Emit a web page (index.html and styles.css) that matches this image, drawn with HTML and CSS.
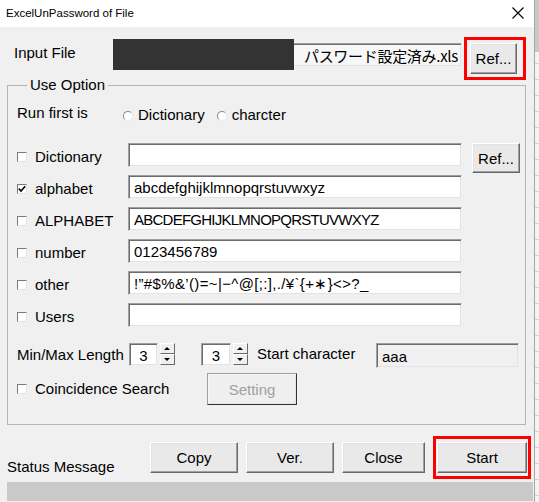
FILE: index.html
```html
<!DOCTYPE html>
<html>
<head>
<meta charset="utf-8">
<link rel="stylesheet" href="styles.css">
</head>
<body>
<div class="screen">
  <div class="window">
    <div class="titlebar">
      <span class="title">ExcelUnPassword of File</span>
      <svg class="close" width="12" height="12" viewBox="0 0 12 12"><path d="M0.5 0.5L11.5 11.5M11.5 0.5L0.5 11.5" stroke="#000" stroke-width="1.1" fill="none"/></svg>
    </div>
    <div class="content">
      <div class="file-row">
        <span class="file-label">Input File</span>
        <div class="textbox file-box">
          <span class="jp">パスワード設定済み.xls</span>
          <div class="redact"></div>
        </div>
        <div class="highlight hl-ref"><button class="btn ref-btn">Ref...</button></div>
      </div>

      <div class="group">
        <div class="legend">Use Option</div>
        <div class="run-row">
          <span class="run-label">Run first is</span>
          <span class="radio"></span><span class="radio-text">Dictionary</span>
          <span class="radio r2"></span><span class="radio-text">charcter</span>
        </div>
        <div class="rows">
          <div class="row">
            <span class="chk"></span><span class="chk-label">Dictionary</span>
            <div class="textbox field"></div>
            <button class="btn ref2">Ref...</button>
          </div>
          <div class="row">
            <span class="chk checked"><svg width="8" height="8" viewBox="0 0 8 8"><path d="M0.8 3.6L3 6L7.2 1.2" stroke="#000" stroke-width="1.6" fill="none"/></svg></span><span class="chk-label">alphabet</span>
            <div class="textbox field">abcdefghijklmnopqrstuvwxyz</div>
          </div>
          <div class="row">
            <span class="chk"></span><span class="chk-label">ALPHABET</span>
            <div class="textbox field upper">ABCDEFGHIJKLMNOPQRSTUVWXYZ</div>
          </div>
          <div class="row">
            <span class="chk"></span><span class="chk-label">number</span>
            <div class="textbox field">0123456789</div>
          </div>
          <div class="row">
            <span class="chk"></span><span class="chk-label">other</span>
            <div class="textbox field symbols">!”#$%&amp;’()=~|−^@[;:],./¥`{+∗}&lt;&gt;?_</div>
          </div>
          <div class="row">
            <span class="chk"></span><span class="chk-label">Users</span>
            <div class="textbox field"></div>
          </div>
        </div>
        <div class="len-row">
          <span class="len-label">Min/Max Length</span>
          <div class="textbox spin-box">3</div>
          <div class="spin"><span class="up"></span><span class="down"></span></div>
          <div class="textbox spin-box sb2">3</div>
          <div class="spin"><span class="up"></span><span class="down"></span></div>
          <span class="start-label">Start character</span>
          <div class="textbox start-box">aaa</div>
        </div>
        <div class="co-row">
          <span class="chk"></span><span class="chk-label co-label">Coincidence Search</span>
          <button class="btn setting" disabled>Setting</button>
        </div>
      </div>

      <div class="bottom-row">
        <span class="status-label">Status Message</span>
        <button class="btn bb copy">Copy</button>
        <button class="btn bb ver">Ver.</button>
        <button class="btn bb closeb">Close</button>
        <div class="highlight hl-start"><button class="btn bb start">Start</button></div>
      </div>
      <div class="status-bar"></div>
    </div>
  </div>
  <div class="sheet"></div>
</div>
</body>
</html>
```
FILE: styles.css
```css
html, body {
  margin: 0;
  padding: 0;
  width: 539px;
  height: 502px;
  overflow: hidden;
  background: #f0f0f0;
}
body {
  font-family: "Liberation Sans", "Noto Sans CJK JP", sans-serif;
  font-size: 15px;
  color: #000;
}
.screen {
  display: flex;
  width: 539px;
  height: 502px;
}
.window {
  width: 534px;
  height: 502px;
  border-right: 1px solid #a6a6a6;
  background: #f0f0f0;
  display: flex;
  flex-direction: column;
  flex: none;
}
.sheet {
  flex: 1;
  background:
    linear-gradient(#c9c9c9, #c9c9c9) 0 0 / 100% 52px no-repeat,
    repeating-linear-gradient(#f3f3f3 0 15px, #d4d4d4 15px 16px);
}
.titlebar {
  height: 27px;
  background: #fff;
  display: flex;
  align-items: center;
  justify-content: space-between;
  padding: 0 10px 2px 6px;
  box-sizing: border-box;
  flex: none;
}
.title {
  font-size: 11.5px;
}
.content {
  display: flex;
  flex-direction: column;
  padding-top: 10px;
}
.file-row {
  display: flex;
  align-items: flex-start;
  height: 43px;
}
.file-label {
  margin: 4px 0 0 14px;
  line-height: 24px;
  width: 99px;
}
.textbox {
  box-sizing: border-box;
  height: 24px;
  background: #fff;
  border: 1px solid;
  border-color: #a0a0a0 #f0f0f0 #f0f0f0 #a0a0a0;
  box-shadow: inset 1px 1px #6d6d6d, inset -1px -1px #e3e3e3;
  line-height: 23px;
  padding: 0 5px;
  white-space: nowrap;
  overflow: hidden;
}
.file-box {
  position: relative;
  overflow: visible;
  margin-top: 6px;
  width: 349px;
  text-align: right;
  padding-right: 3px;
  background: #f7f7f7;
}
.jp {
  font-family: "Noto Sans CJK JP", sans-serif;
  font-size: 15px;
  letter-spacing: -0.3px;
}
.redact {
  position: absolute;
  left: -1px;
  top: -5px;
  width: 181px;
  height: 31px;
  background: #333;
}
.highlight {
  border: 3px solid #ff0000;
  box-sizing: border-box;
}
.hl-ref {
  margin-left: 2px;
  width: 62px;
  height: 43px;
  padding: 3px 6px 3px 3px;
}
.btn {
  font: inherit;
  color: #000;
  background: #e9e9e9;
  border: 1px solid;
  border-color: #fff #696969 #696969 #fff;
  box-shadow: inset -1px -1px #a0a0a0, inset 1px 1px #e3e3e3;
  padding: 0;
  box-sizing: border-box;
  line-height: 1;
}
.ref-btn {
  width: 47px;
  height: 31px;
  display: block;
}
.group {
  margin: 5px 0 0 7px;
  width: 519px;
  box-sizing: border-box;
  border: 1px solid #b4b4b4;
  padding: 0 0 19px 9px;
}
.legend {
  margin: -11px 0 0 10px;
  background: #f0f0f0;
  padding: 0 3px;
  width: fit-content;
  line-height: 20px;
}
.run-row {
  margin-top: 6px;
  height: 24px;
  display: flex;
  align-items: center;
}
.run-label {
  width: 106px;
  margin-top: -2px;
}
.radio {
  width: 10px;
  height: 10px;
  border-radius: 50%;
  box-sizing: border-box;
  background: #fff;
  border: 1px solid;
  border-color: #8a8a8a #e8e8e8 #e8e8e8 #8a8a8a;
  margin-top: 5px;
}
.r2 {
  margin-left: 12px;
}
.radio-text {
  margin-left: 5px;
  margin-top: 2px;
}
.rows {
  margin-top: 18px;
  display: flex;
  flex-direction: column;
  gap: 8px;
}
.row {
  display: flex;
  align-items: flex-start;
  height: 24px;
}
.chk {
  width: 10px;
  height: 10px;
  box-sizing: border-box;
  background: #fff;
  border: 1px solid;
  border-color: #7a7a7a #e3e3e3 #e3e3e3 #7a7a7a;
  margin-top: 9px;
  display: flex;
  align-items: center;
  justify-content: center;
  flex: none;
}
.chk-label {
  margin: 2px 0 0 8px;
  width: 93px;
  line-height: 24px;
}
.field {
  width: 334px;
}
.upper {
  letter-spacing: -0.75px;
}
.symbols {
  letter-spacing: 0.35px;
}
.ref2 {
  margin-left: 10px;
  width: 48px;
  height: 30px;
}
.len-row {
  margin-top: 16px;
  height: 25px;
  display: flex;
  align-items: flex-start;
}
.len-label {
  width: 112px;
  line-height: 24px;
}
.spin-box {
  width: 29px;
  height: 23px;
  text-align: center;
  padding: 0;
}
.sb2 {
  margin-left: 26px;
  width: 30px;
}
.spin {
  margin-left: 2px;
  width: 15px;
  height: 22px;
  display: flex;
  flex-direction: column;
}
.spin span {
  flex: 1;
  background: #f0f0f0;
  border: 1px solid;
  border-color: #fff #696969 #696969 #fff;
  position: relative;
}
.spin span::after {
  content: "";
  position: absolute;
  left: 3px;
  top: 3px;
  border-left: 3.5px solid transparent;
  border-right: 3.5px solid transparent;
}
.spin .up::after {
  border-bottom: 3.5px solid #000;
}
.spin .down::after {
  border-top: 3.5px solid #000;
}
.start-label {
  margin-left: 9px;
  line-height: 22px;
  width: 119px;
}
.start-box {
  width: 143px;
  height: 25px;
  background: #f0f0f0;
  padding-left: 5px;
  line-height: 26px;
}
.co-row {
  margin-top: 5px;
  height: 32px;
  display: flex;
  align-items: flex-start;
}
.co-row .chk {
  margin-top: 11px;
}
.co-label {
  width: 172px;
  line-height: 32px;
  margin-top: 0;
}
.setting {
  width: 90px;
  height: 32px;
  color: #a0a0a0;
  border-color: #a0a0a0 #333 #333 #a0a0a0;
  box-shadow: inset 1px 1px #f6f6f6, inset -1px -1px #e3e3e3;
  background: #efefef;
}
.bottom-row {
  margin-top: 11px;
  height: 43px;
  display: flex;
  align-items: flex-start;
}
.status-label {
  margin: 21px 0 0 7px;
  width: 143px;
  line-height: 20px;
}
.bb {
  margin-top: 6px;
  height: 31px;
  width: 88px;
  margin-right: 8px;
}
.closeb {
  width: 83px;
}
.hl-start {
  width: 98px;
  height: 43px;
  padding: 3px 1px;
}
.start {
  margin: 0;
  width: 90px;
  display: block;
}
.status-bar {
  margin: 3px 0 0 7px;
  height: 19px;
  width: 526px;
  background: #c9c9c9;
}
```
